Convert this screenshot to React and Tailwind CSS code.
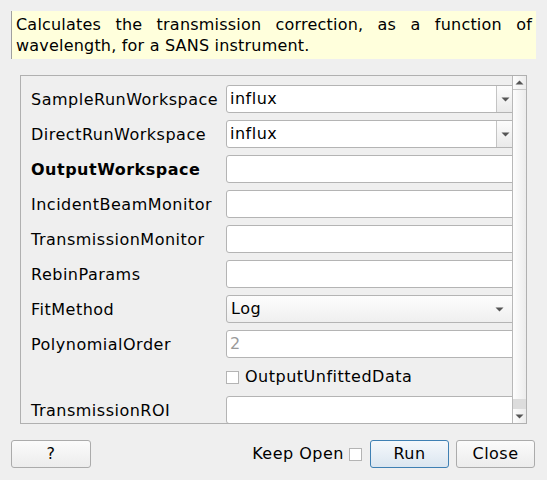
import React from 'react';

const labelFont = { fontFamily: '"DejaVu Sans", sans-serif' };

const Caret = ({ className = '' }) => (
  <svg width="9" height="5" viewBox="0 0 9 5" className={className}>
    <path d="M0.5 0.5 L8.5 0.5 L4.5 4.5 Z" fill="#555" />
  </svg>
);

const ComboEditable = ({ value }) => (
  <div className="flex h-[28px] w-[292px] shrink-0 rounded-[3px] border border-[#b4b4b4] bg-white">
    <div className="flex flex-1 items-center pl-[3px] text-[16px] text-black">{value}</div>
    <div className="flex w-[18px] items-center justify-center border-l border-[#c4c4c4] bg-gradient-to-b from-[#fcfcfc] to-[#eaeaea]">
      <Caret />
    </div>
    <div className="w-[3px]" />
  </div>
);

const ComboPlain = ({ value }) => (
  <div className="flex h-[28px] w-[292px] shrink-0 items-center rounded-[3px] border border-[#b4b4b4] bg-gradient-to-b from-[#fdfdfd] to-[#efefef] pl-[4px] pr-[13px]">
    <span className="flex-1 text-[16px] text-black">{value}</span>
    <Caret />
  </div>
);

const TextBox = ({ placeholder }) => (
  <div className="flex h-[28px] w-[292px] shrink-0 items-center rounded-[3px] border border-[#b4b4b4] bg-white pl-[3px] text-[16px] text-[#9a9a9a]">
    {placeholder}
  </div>
);

const Row = ({ label, bold, children }) => (
  <div className="flex h-[28px] items-center">
    <div className={`w-[205px] shrink-0 pl-[10px] pt-[1px] text-[16px] text-black ${bold ? 'font-bold' : ''}`}>{label}</div>
    {children}
  </div>
);

const Button = ({ children, className = '', primary }) => (
  <button
    className={`flex h-[28px] items-center justify-center rounded-[3px] border text-[16px] text-black ${
      primary
        ? 'border-[#3f80b3] bg-gradient-to-b from-[#f5f8fb] to-[#dbe6f0]'
        : 'border-[#ababab] bg-gradient-to-b from-[#fbfbfb] to-[#ececec]'
    } ${className}`}
    style={labelFont}
  >
    {children}
  </button>
);

export default function App() {
  return (
    <div className="h-[480px] w-[547px] overflow-hidden bg-[#efefef] tracking-[0.5px]" style={labelFont}>
      <div className="pl-[11px] pr-[11px] pt-[11px]">
        <div className="h-[48px] border-l border-[#a0a0a0] bg-[#ffffdc] pl-[4px] pr-[4px] pt-[3px] text-justify text-[16px] leading-[21px] tracking-[0.2px] text-black">
          Calculates the transmission correction, as a function of wavelength, for a SANS instrument.
        </div>
      </div>

      <div className="ml-[20px] mt-[16px] flex h-[349px] w-[507px] border border-[#b0b0b0]">
        <div className="flex flex-1 flex-col gap-[7px] overflow-hidden pt-[9px]">
          <Row label="SampleRunWorkspace"><ComboEditable value="influx" /></Row>
          <Row label="DirectRunWorkspace"><ComboEditable value="influx" /></Row>
          <Row label="OutputWorkspace" bold><TextBox /></Row>
          <Row label="IncidentBeamMonitor"><TextBox /></Row>
          <Row label="TransmissionMonitor"><TextBox /></Row>
          <Row label="RebinParams"><TextBox /></Row>
          <Row label="FitMethod"><ComboPlain value="Log" /></Row>
          <Row label="PolynomialOrder"><TextBox placeholder="2" /></Row>
          <Row label="">
            <div className="flex items-center gap-[6px]">
              <div className="h-[13px] w-[13px] border border-[#b4b4b4] bg-white" />
              <span className="text-[16px] text-black">OutputUnfittedData</span>
            </div>
          </Row>
          <Row label="TransmissionROI"><TextBox /></Row>
        </div>

        <div className="flex w-[14px] shrink-0 flex-col border-l border-[#b8b8b8] bg-[#efefef]">
          <div className="flex h-[14px] items-center justify-center border-b border-[#c8c8c8] bg-gradient-to-r from-[#fdfdfd] to-[#ececec]">
            <Caret className="rotate-180" />
          </div>
          <div className="flex-1 bg-gradient-to-r from-[#fdfdfd] to-[#ececec]" />
          <div className="h-[10px] bg-[#dcdcdc]" />
          <div className="flex h-[14px] items-center justify-center bg-gradient-to-r from-[#fdfdfd] to-[#ececec]">
            <Caret />
          </div>
        </div>
      </div>

      <div className="mt-[16px] flex items-center pl-[11px] pr-[12px]">
        <Button className="w-[80px]">?</Button>
        <div className="flex-1" />
        <span className="text-[16px] text-black">Keep Open</span>
        <div className="ml-[5px] h-[13px] w-[13px] border border-[#b4b4b4] bg-white" />
        <Button primary className="ml-[8px] w-[79px]">Run</Button>
        <Button className="ml-[7px] w-[79px]">Close</Button>
      </div>
    </div>
  );
}
